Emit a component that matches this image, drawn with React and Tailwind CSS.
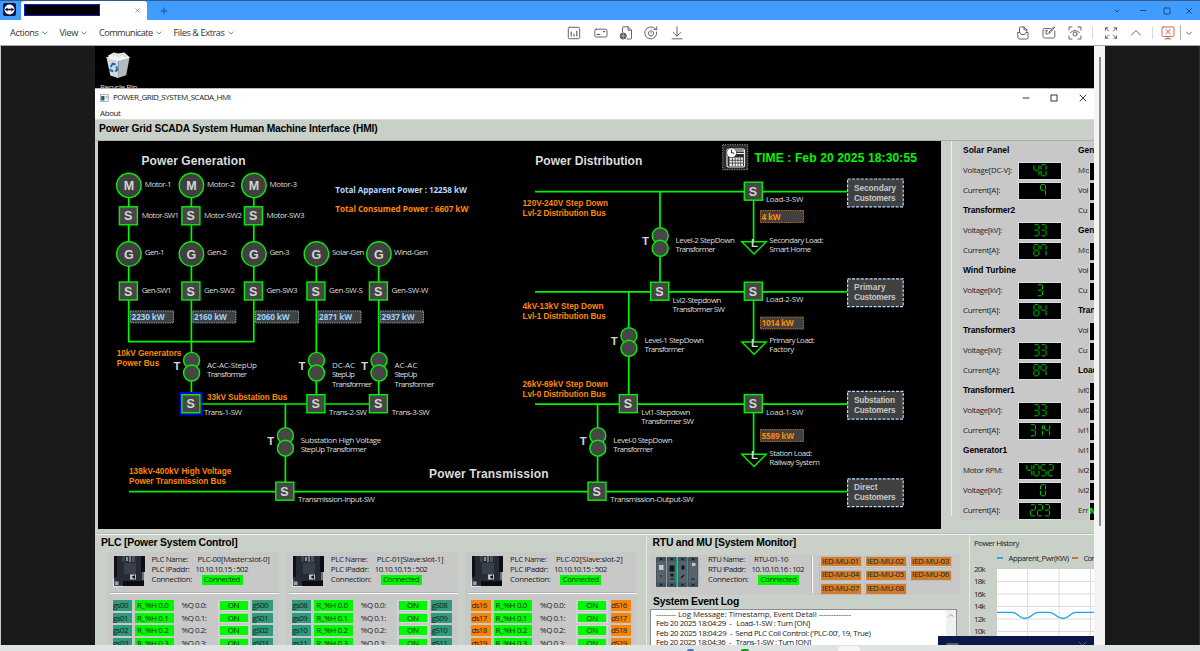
import React, { useLayoutEffect, useRef, useState } from "react";

const SEGOE = '"Open Sans", "Noto Sans", sans-serif';
const ARIAL = '"Liberation Sans", Arial, sans-serif';

/* Text whose letter spacing is tuned so that it spans exactly `w` pixels. */
function Fit({ w, className = "", children }) {
  const ref = useRef(null);
  const [spacing, setSpacing] = useState(0);
  useLayoutEffect(() => {
    const natural = ref.current.getBoundingClientRect().width;
    setSpacing((w - natural) / String(children).length);
  }, []);
  return (
    <span ref={ref} className={`inline-block shrink-0 whitespace-pre ${className}`} style={{ letterSpacing: `${spacing}px` }}>
      {children}
    </span>
  );
}

/* ---------- single-line diagram pieces ---------- */

const G = "#00f400";

function Label({ x, y, w, children, size = 8, fill = "#dcdcdc", bold = false, arial = false }) {
  return (
    <text
      x={x}
      y={y + size * 0.35}
      textLength={w}
      fontSize={size}
      fill={fill}
      fontWeight={bold ? 700 : 400}
      fontFamily={arial ? ARIAL : SEGOE}
    >
      {children}
    </text>
  );
}

function Glyph({ x, y, size = 12.5, children }) {
  return (
    <text x={x} y={y + size * 0.36} textAnchor="middle" fontSize={size} fontWeight="700" fontFamily={ARIAL} fill="#d2d6d2">
      {children}
    </text>
  );
}

function Round({ x, y, t }) {
  return (
    <g>
      <circle cx={x} cy={y} r="12.2" fill="#404040" stroke={G} strokeWidth="1.4" />
      <Glyph x={x} y={y + 0.5}>{t}</Glyph>
    </g>
  );
}

function Switch({ x, y }) {
  return (
    <g>
      <rect x={x - 9} y={y - 9} width="18" height="18" fill="#464646" stroke={G} strokeWidth="1.4" />
      <Glyph x={x - 0.3} y={y}>S</Glyph>
    </g>
  );
}

function Transformer({ x, y }) {
  return (
    <g>
      <circle cx={x} cy={y} r="8" fill="#464646" stroke={G} strokeWidth="1.4" />
      <circle cx={x} cy={y + 12.6} r="8" fill="#464646" stroke={G} strokeWidth="1.4" />
      <Glyph x={x - 14.6} y={y + 5.5} size={11.5}>T</Glyph>
    </g>
  );
}

function Meter({ x, y, w, color, children }) {
  return (
    <g>
      <rect x={x + 0.5} y={y + 0.5} width="43" height="12" fill="#404040" stroke={color} strokeOpacity="0.85" strokeWidth="0.9" strokeDasharray="1.4 0.9" />
      <Label x={x + 1.6} y={y + 6.9} w={w} bold size={8.2} fill={color}>{children}</Label>
    </g>
  );
}

function Load({ y }) {
  return (
    <g>
      <path d={`M741.8 ${y}H766.2L754 ${y + 12.2}Z`} fill="none" stroke={G} strokeWidth="1.4" />
      <Glyph x={754.6} y={y + 1} size={11.5}>L</Glyph>
    </g>
  );
}

function Customers({ y, name, w }) {
  return (
    <g>
      <rect x="847.6" y={y} width="55.6" height="27.8" fill="#404040" stroke="#b4dcff" strokeWidth="1.2" strokeDasharray="3 1.4" />
      <Label x={854} y={y + 8.7} w={w} size={8.3} bold arial fill="#c8c8c8">{name}</Label>
      <Label x={854} y={y + 18.7} w={41.5} size={8.3} bold arial fill="#c8c8c8">Customers</Label>
    </g>
  );
}

const WIRES = [
  "M128.7 186V341.7M191.4 186V404M253.8 186V341.7M128 341.7H254.5M316.3 254V404M378.7 254V404",
  "M190 404H378.7M285.4 404V491.6M129 491.6H847M535 191.6H847M660 191.6V291M535 291.8H847",
  "M753.6 191V241.7M753.6 291V342M753.6 404V454M628.8 291.8V404M535 404.1H847M597.6 404V491.6",
];

const LABELS = [
  [144.7, 184, 27, "Motor-1"], [207, 184, 28, "Motor-2"], [269.5, 184, 27.5, "Motor-3"],
  [141.7, 215, 37.5, "Motor-SW1"], [204, 215, 38, "Motor-SW2"], [266.5, 215, 38, "Motor-SW3"],
  [144.7, 252.5, 20, "Gen-1"], [207, 252.5, 20, "Gen-2"], [269.5, 252.5, 20, "Gen-3"],
  [332, 252.5, 32.5, "Solar-Gen"], [394, 252.5, 34, "Wind-Gen"],
  [141.7, 290, 30, "Gen-SW1"], [204, 290, 31, "Gen-SW2"], [266.5, 290, 31, "Gen-SW3"],
  [329, 290, 34, "Gen-SW-S"], [391.5, 290, 37, "Gen-SW-W"],
  [207, 365, 50, "AC-AC-StepUp"], [207, 374.5, 40, "Transformer"],
  [332, 365, 23, "DC-AC"], [332, 374.5, 23, "StepUp"], [332, 384, 40, "Transformer"],
  [394.5, 365, 23, "AC-AC"], [394.5, 374.5, 23, "StepUp"], [394.5, 384, 40, "Transformer"],
  [204, 412, 38, "Trans-1-SW"], [329, 412, 38, "Trans-2-SW"], [391.7, 412, 38, "Trans-3-SW"],
  [300.7, 440, 80.5, "Substation High Voltage"], [300.7, 449.5, 66, "StepUp Transformer"],
  [298, 499.5, 77, "Transmission-Input-SW"], [610.2, 499.5, 83.5, "Transmission-Output-SW"],
  [766, 199.5, 37.3, "Load-3-SW"], [766, 299.5, 37.3, "Load-2-SW"], [766, 412, 37.3, "Load-1-SW"],
  [675.5, 240, 59.5, "Level-2 StepDown"], [675.5, 249.5, 40, "Transformer"],
  [644.5, 340, 59.5, "Level-1 StepDown"], [644.5, 349.5, 40, "Transformer"],
  [613.2, 440, 59.5, "Level-0 StepDown"], [613.2, 449.5, 40, "Transformer"],
  [672.5, 300, 49, "Lvl2-Stepdown"], [672.5, 309.2, 52.5, "Transformer SW"],
  [641.3, 412, 49, "Lvl1-Stepdown"], [641.3, 421.5, 52.5, "Transformer SW"],
  [769.3, 240, 54.3, "Secondary Load:"], [769.3, 249.5, 42, "Smart Home"],
  [769.3, 340, 45.5, "Primary Load:"], [769.3, 349.5, 25, "Factory"],
  [769.3, 452.7, 43, "Station Load:"], [769.3, 462, 50.5, "Railway System"],
];

const BUSES = [
  [116.7, 352.7, 64.7, "10kV Generators"], [116.7, 362.7, 42.5, "Power Bus"],
  [207, 396.7, 80.3, "33kV Substation Bus"],
  [129, 471.5, 102.3, "138kV-400kV High Voltage"], [129, 481.5, 97, "Power Transmission Bus"],
  [522.5, 202.8, 85.5, "120V-240V Step Down"], [522.5, 212.8, 83.3, "Lvl-2 Distribution Bus"],
  [522.5, 306, 81, "4kV-13kV Step Down"], [522.5, 316, 83.3, "Lvl-1 Distribution Bus"],
  [522.5, 384, 85.5, "26kV-69kV Step Down"], [522.5, 394, 83.3, "Lvl-0 Distribution Bus"],
];

const SWITCHES = [
  [128.4, 215.8], [190.9, 215.8], [253.4, 215.8],
  [128.4, 291], [190.9, 291], [253.4, 291], [315.9, 291], [378.4, 291],
  [190.9, 403.7], [315.9, 403.7], [378.4, 403.7], [284.8, 491.2], [597, 491.2],
  [753.3, 191.2], [659.7, 291.2], [753.3, 291.2], [628.3, 403.6], [753.3, 403.6],
];

function GridMap() {
  return (
    <svg className="block h-[388px] w-[843px] shrink-0 bg-black" viewBox="98 141 843 388">
      <g fill="none" stroke={G} strokeWidth="1.7">
        {WIRES.map((d) => <path key={d} d={d} />)}
      </g>
      <Label x={141.5} y={161} w={104} size={12} bold arial>Power Generation</Label>
      <Label x={535.3} y={161} w={107} size={12} bold arial>Power Distribution</Label>
      <Label x={429} y={473.7} w={119.5} size={12} bold arial>Power Transmission</Label>
      <Label x={335.3} y={190.3} w={131.5} size={8.2} bold fill="#aed8ff">Total Apparent Power : 12258 kW</Label>
      <Label x={335.3} y={209.2} w={133} size={8.2} bold fill="#ff8800">Total Consumed Power : 6607 kW</Label>
      <Label x={754.6} y={158.1} w={162.4} size={12} bold arial fill="#00f800">TIME : Feb 20 2025 18:30:55</Label>

      <rect x="722.7" y="144.7" width="25" height="25" fill="#2c2c2c" stroke="#9a9a9a" strokeDasharray="1.2 1.2" />
      <rect x="727" y="149" width="17.5" height="18" rx="1.5" fill="none" stroke="#e8e8e8" strokeWidth="1.2" />
      <path d="M735 151h9M735 153.5h9" stroke="#fff" strokeWidth="1.2" />
      <rect x="729.5" y="157.5" width="13.5" height="8.5" fill="#f2f2f2" />
      <path d="M732.4 157.5v8.5M735.2 157.5v8.5M738 157.5v8.5M740.7 157.5v8.5M729.5 160.3h13.5M729.5 163.1h13.5" stroke="#222" strokeWidth="0.7" />
      <circle cx="731.6" cy="152.8" r="4.9" fill="#fff" stroke="#222" strokeWidth="0.6" />
      <path d="M731.6 149.5V153H734.2" fill="none" stroke="#111" strokeWidth="0.9" />

      {[128.9, 191.4, 253.9].map((x, i) => <Round key={i} x={x} y={185.4} t="M" />)}
      {[128.9, 191.4, 253.9, 316.4, 378.9].map((x, i) => <Round key={i} x={x} y={254} t="G" />)}
      <rect x="181" y="393" width="20.6" height="21.4" fill="none" stroke="#0000ff" strokeWidth="2" />
      {SWITCHES.map(([x, y], i) => <Switch key={i} x={x} y={y} />)}
      {[[191.6, 360.4], [316.5, 360.4], [379, 360.4], [285.4, 435.6], [660.2, 235.7], [628.9, 335.7], [597.8, 435.6]].map(([x, y], i) => (
        <Transformer key={i} x={x} y={y} />
      ))}
      <Load y={241.8} />
      <Load y={342} />
      <Load y={454.2} />

      <Meter x={130} y={310.4} w={33} color="#9cd0f8">2230 kW</Meter>
      <Meter x={192.4} y={310.4} w={33} color="#9cd0f8">2160 kW</Meter>
      <Meter x={255} y={310.4} w={33} color="#9cd0f8">2060 kW</Meter>
      <Meter x={317.5} y={310.4} w={33} color="#9cd0f8">2871 kW</Meter>
      <Meter x={380} y={310.4} w={33} color="#9cd0f8">2937 kW</Meter>
      <Meter x={760} y={210} w={19} color="#ff8800">4 kW</Meter>
      <Meter x={760} y={316.5} w={32} color="#ff8800">1014 kW</Meter>
      <Meter x={760} y={429} w={32.5} color="#ff8800">5589 kW</Meter>

      <Customers y={179} name="Secondary" w={42} />
      <Customers y={278.8} name="Primary" w={31.5} />
      <Customers y={391.4} name="Substation" w={41} />
      <Customers y={478.8} name="Direct" w={23.5} />

      {LABELS.map(([x, y, w, t], i) => <Label key={i} x={x} y={y} w={w}>{t}</Label>)}
      {BUSES.map(([x, y, w, t], i) => <Label key={i} x={x} y={y} w={w} size={8.2} bold arial fill="#ff8800">{t}</Label>)}
    </svg>
  );
}

/* ---------- seven segment gauges ---------- */

const SEG_PATH = {
  a: "M0.9 0.5H4.7", b: "M5.4 1.2V5.3", c: "M5.4 6.7V11", d: "M0.9 11.6H4.7",
  e: "M0.4 6.7V11", f: "M0.4 1.2V5.3", g: "M0.9 6H4.7",
};
const DIGITS = {
  0: "abcdef", 1: "bc", 2: "abdeg", 3: "abcdg", 4: "bcfg", 5: "acdfg",
  7: "abcf", 8: "abcdefg", 9: "abcfg",
};

function Display({ value, shift = 0 }) {
  const start = 21 - (value.length * 7.1 - 1.3) / 2 + shift;
  return (
    <svg className="h-[18px] w-[44px] shrink-0 border border-[#d8dce4] bg-black" viewBox="0 0 42 16">
      {value.split("").map((d, i) => (
        <g key={i} transform={`translate(${start + i * 7.1} 1.2)`} stroke="#00c400" strokeWidth="1">
          {(DIGITS[d] || "").split("").map((s) => <path key={s} d={SEG_PATH[s]} />)}
        </g>
      ))}
    </svg>
  );
}

const GAUGES = [
  ["Solar Panel", 46.5], ["Voltage[DC-V]:", 49, "40"], ["Current[A]:", 37, "9", 3],
  ["Transformer2", 52], ["Voltage[kV]:", 39, "33"], ["Current[A]:", 37, "87"],
  ["Wind Turbine", 53], ["Voltage[kV]:", 39, "3"], ["Current[A]:", 37, "84"],
  ["Transformer3", 52], ["Voltage[kV]:", 39, "33"], ["Current[A]:", 37, "89"],
  ["Transformer1", 51.5], ["Voltage[kV]:", 39, "33"], ["Current[A]:", 37, "314"],
  ["Generator1", 44], ["Motor RPM:", 39.5, "4052"], ["Voltage[kV]:", 39, "0", 3], ["Current[A]:", 37, "223"],
];

const CLIPPED = [
  ["Gen", 16.5, 1], ["Mo", 12], ["Vol", 10], ["Cu", 9.5],
  ["Gen", 16.5, 1], ["Mo", 12], ["Vol", 10], ["Cu", 9.5],
  ["Tran", 17.5, 1], ["Vol", 10], ["Cu", 9.5],
  ["Load", 19.5, 1], ["lvl0", 11.5], ["lvl0", 11.5], ["lvl1", 11.5], ["lvl1", 11.5],
  ["lvl2", 11.5], ["lvl2", 11.5], ["Err", 10.3],
];

function GaugePanel() {
  return (
    <div className="flex h-[379px] w-[134px] shrink-0 overflow-hidden bg-[#c8c8c8] pl-[3px] text-[7.9px] leading-none text-[#222]">
      <div className="flex w-[115px] shrink-0 flex-col">
        {GAUGES.map(([label, w, value, shift], i) => (
          <div key={i} className="flex h-[20px] shrink-0 items-center justify-between pr-[16.5px]">
            {value ? (
              <>
                <Fit w={w}>{label}</Fit>
                <Display value={value} shift={shift} />
              </>
            ) : (
              <Fit w={w} className="pb-[1px] font-['Liberation_Sans'] text-[8.4px] font-bold text-black">{label}</Fit>
            )}
          </div>
        ))}
      </div>
      <div className="flex w-[16px] shrink-0 flex-col overflow-hidden">
        {CLIPPED.map(([label, w, head], i) => (
          <div key={i} className="flex h-[20px] shrink-0 items-center">
            {head ? (
              <Fit w={w} className="pb-[1px] font-['Liberation_Sans'] text-[8.4px] font-bold text-black">{label}</Fit>
            ) : (
              <>
                <span className="w-[10.5px] shrink-0 overflow-hidden"><Fit w={w}>{label}</Fit></span>
                <span className="flex h-[17px] w-[6px] shrink-0 items-center overflow-hidden border-l border-[#d8dce4] bg-black text-[8px] font-bold text-[#00ff00]">
                  {i === 18 ? "N" : ""}
                </span>
              </>
            )}
          </div>
        ))}
      </div>
    </div>
  );
}

/* ---------- lower panels ---------- */

function PlcPicture() {
  return (
    <svg className="h-[32px] w-[32px] shrink-0" viewBox="0 0 32 32">
      <rect x="1" y="1" width="30" height="30" fill="#262b36" />
      <rect x="1" y="1" width="3" height="21" fill="#111" />
      <rect x="28" y="1" width="4" height="16" fill="#0c0e12" />
      <rect x="29" y="17" width="2" height="8" fill="#6b7078" />
      <rect x="9" y="1" width="3" height="6" fill="#3c444e" />
      <rect x="13" y="2" width="2" height="4" fill="#8a929a" />
      <rect x="16" y="1" width="2" height="6" fill="#727a84" />
      <rect x="19" y="1" width="3" height="6" fill="#49525e" />
      <rect x="11" y="8" width="12" height="11" fill="#3a404a" />
      <rect x="17" y="19.5" width="6" height="5" fill="#c4c8c8" />
      <path d="M22 20v4l-3.5-2z" fill="#111" />
      <rect x="10" y="26" width="21" height="5" fill="#0b0c10" />
      <rect x="2" y="26.5" width="3.6" height="3.6" fill="#99a0ae" />
      <path d="M0.7 24v7.4H10" fill="none" stroke="#e8e8e8" />
    </svg>
  );
}

function Connected() {
  return (
    <span className="flex h-[10px] w-[41px] items-center justify-center bg-[#00f800] text-[#063a06]">
      <Fit w={36}>Connected</Fit>
    </span>
  );
}

function Field({ label, w, col, children }) {
  return (
    <div className="flex h-[10px] items-center">
      <span className={`flex shrink-0 ${col}`}><Fit w={w}>{label}</Fit></span>
      {children}
    </div>
  );
}

function Plc({ name, nameW, inputs, outputs, tag }) {
  return (
    <div className="flex h-[94px] w-[172px] shrink-0 flex-col bg-[#c8c8c8] text-[8px] leading-none text-[#1c1c1c]">
      <div className="flex h-[40px] shrink-0 pl-[6px] pt-[2.5px]">
        <PlcPicture />
        <div className="ml-[7px] flex flex-col text-[7.9px]">
          <Field label="PLC Name:" w={36.5} col="w-[46px]"><Fit w={nameW}>{name}</Fit></Field>
          <Field label="PLC IPaddr:" w={38} col="w-[44px]"><Fit w={52.5}>10.10.10.15 : 502</Fit></Field>
          <Field label="Connection:" w={40.5} col="w-[50px]"><Connected /></Field>
        </div>
      </div>
      <div className="ml-[3px] h-[2px] shrink-0 border-b border-white bg-[#b4b4b4]" />
      <div className="flex flex-col overflow-hidden pt-[5px]">
        {inputs.map((id, i) => (
          <div key={id} className="flex h-[12.5px] shrink-0 items-center pl-[6px]">
            <span className={`flex h-[10.5px] w-[19.5px] items-center pl-[0.5px] ${tag}`}><Fit w={15}>{id}</Fit></span>
            <span className="ml-[3px] flex h-[10.5px] w-[38.5px] items-center bg-[#00f800] pl-[2px]"><Fit w={31.5}>{`R_%H 0.${i}`}</Fit></span>
            <span className="ml-[8px] w-[36px]"><Fit w={25}>{`%Q 0.${i}:`}</Fit></span>
            <span className="flex h-[11px] w-[32px] items-center justify-center border border-[#d6d6d6]">
              <span className="flex h-[8.5px] w-[28px] items-center justify-center bg-[#00f800]"><Fit w={11.5}>ON</Fit></span>
            </span>
            <span className={`ml-[2.5px] flex h-[10.5px] w-[20.5px] items-center pl-[0.5px] ${tag}`}><Fit w={15.5}>{outputs[i]}</Fit></span>
          </div>
        ))}
      </div>
    </div>
  );
}

function RtuPicture() {
  return (
    <svg className="h-[30px] w-[43px] shrink-0" viewBox="0 0 43 30">
      {[0, 10.8, 21.6, 32].map((x, i) => (
        <g key={i}>
          <rect x={x} y="0" width="10.2" height="30" rx="0.8" fill="#44525e" />
          <rect x={x + 0.8} y="4.5" width="8.4" height="21" fill="#56646f" />
          <circle cx={x + 5} cy="2.2" r="1.1" fill="#151a1e" />
          <circle cx={x + 5} cy="27.8" r="1.1" fill="#151a1e" />
        </g>
      ))}
      <path d="M3 8h4.5v5H3zM36 6h3.4v3H36z" fill="#c2c8c8" />
      <path d="M4 19h2M14 9h4v5h-4zM15 17h2v2h-2zM14 22h4M26 9h2v3h-2zM25 21l3-3M35 22h4" stroke="#10161a" fill="#10161a" strokeWidth="1.1" />
      <path d="M20.6 1v28M31.4 1v28" stroke="#00b870" strokeWidth="1" />
    </svg>
  );
}

const IEDS = ["01", "02", "03", "04", "05", "06", "07", "08"];

function RtuColumn() {
  return (
    <div className="flex w-[322px] shrink-0 flex-col pl-[3px] text-[#1c1c1c]">
      <div className="flex h-[20px] shrink-0 items-center pl-[2.5px] pb-[3px]">
        <Fit w={143.5} className="font-['Liberation_Sans'] text-[10.4px] font-bold leading-none text-black">RTU and MU [System Monitor]</Fit>
      </div>
      <div className="flex h-[40px] w-[310px] shrink-0 bg-[#c8c8c8] text-[7.9px] leading-none">
        <div className="pl-[6px] pt-[1.5px]"><RtuPicture /></div>
        <div className="ml-[9px] flex w-[103px] shrink-0 flex-col">
          <Field label="RTU Name:" w={36.5} col="w-[46px]"><Fit w={34}>RTU-01-10</Fit></Field>
          <Field label="RTU IPaddr:" w={37.5} col="w-[43.5px]"><Fit w={52.5}>10.10.10.16 : 102</Fit></Field>
          <Field label="Connection:" w={40.5} col="w-[50px]"><Connected /></Field>
        </div>
        <div className="mt-px h-[37px] w-[2px] border-l border-[#b0b0b0] bg-white" />
        <div className="ml-[6px] grid h-[39px] grid-cols-3 gap-x-[2px] gap-y-[2px] pt-[1px]">
          {IEDS.map((n) => (
            <span key={n} className="flex h-[11.6px] w-[43px] items-center justify-center border border-[#bdbdbd] bg-[#d0d0d0]">
              <span className="flex h-[9.2px] w-[40px] items-center justify-center bg-[#d07c28]"><Fit w={37}>{`IED-MU-${n}`}</Fit></span>
            </span>
          ))}
        </div>
      </div>
      <div className="flex h-[14px] shrink-0 items-center pl-[3px]">
        <Fit w={86} className="font-['Liberation_Sans'] text-[10.4px] font-bold leading-none text-black">System Event Log</Fit>
      </div>
      <div className="flex h-[50px] w-[307px] shrink-0 justify-between border border-[#8a8e94] bg-white text-[7.9px] leading-[9.4px]">
        <div className="flex flex-col items-start pl-[5px]">
          <Fit w={195}>-------- Log Message: Timestamp, Event Detail -------------</Fit>
          <Fit w={154}>{"Feb 20 2025 18:04:29  -   Load-1-SW : Turn [ON]"}</Fit>
          <Fit w={214.5}>{"Feb 20 2025 18:04:29  -  Send PLC Coil Control: ('PLC-00', 19, True)"}</Fit>
          <Fit w={155}>{"Feb 20 2025 18:04:36  -   Trans-1-SW : Turn [ON]"}</Fit>
        </div>
        <div className="flex w-[10px] justify-center bg-[#f0f0f0] pt-[3px]">
          <svg className="h-[5px] w-[6px]" viewBox="0 0 6 5"><path d="M0.8 3.6L3 1.4L5.2 3.6" fill="none" stroke="#888" strokeWidth="0.8" /></svg>
        </div>
      </div>
    </div>
  );
}

function HistoryColumn() {
  return (
    <div className="flex min-w-0 flex-1 flex-col overflow-hidden border-l border-[#e8ece8] pl-[4px] text-[7.9px] leading-none text-[#222]">
      <div className="flex h-[17.5px] shrink-0 items-center"><Fit w={45}>Power History</Fit></div>
      <div className="flex h-[13px] shrink-0 items-center whitespace-nowrap pl-[22.5px]">
        <span className="mr-[6px] mb-[2px] h-[1.4px] w-[6px] shrink-0 bg-[#2ea8f0]" />
        <Fit w={60}>Apparent_Pwr(KW)</Fit>
        <span className="ml-[3px] mr-[6px] mb-[2px] h-[1.4px] w-[6px] shrink-0 bg-[#b87838]" />
        <Fit w={14.5}>Cons</Fit>
      </div>
      <div className="flex shrink-0">
        <div className="flex w-[22.5px] shrink-0 flex-col">
          {["20k", "18k", "16k", "14k", "12k", "10k"].map((t) => (
            <span key={t} className="flex h-[12.5px] items-start"><Fit w={11}>{t}</Fit></span>
          ))}
        </div>
        <svg className="mt-[3px] h-[78px] w-[98px] shrink-0 bg-white" viewBox="0 0 98 78">
          <path d="M0 12.5H98M0 25H98M0 37.5H98M0 50H98M0 62.5H98M30.7 0V78M62 0V78M93.5 0V78" stroke="#dcdcdc" strokeWidth="1" />
          <path d="M0 43.3H15C21 43.3 22 49.5 28 49.5C35 49.5 35 43.3 41 43.3H52C58 43.3 60 49.5 66 49.5C72 49.5 73 43.3 79 43.3H98" fill="none" stroke="#1ea4f0" strokeWidth="1.3" />
        </svg>
      </div>
    </div>
  );
}

/* ---------- viewer chrome ---------- */

function Icon({ w, children, color = "#555", box = 14 }) {
  return (
    <span className={`flex shrink-0 items-center justify-center ${w}`}>
      <svg width={box} height={box} viewBox={`0 0 ${box} ${box}`} fill="none" stroke={color} strokeWidth="0.9" strokeLinecap="round" strokeLinejoin="round">
        {children}
      </svg>
    </span>
  );
}

function MenuItem({ w, children }) {
  return (
    <span className="flex items-center">
      <Fit w={w}>{children}</Fit>
      <svg className="ml-[3px] mt-[2px] h-[4px] w-[6px]" viewBox="0 0 6 4"><path d="M0.5 0.6L3 3.1L5.5 0.6" fill="none" stroke="#666" strokeWidth="0.8" /></svg>
    </span>
  );
}

function TitleBar() {
  return (
    <div className="flex h-[20px] shrink-0 items-stretch border-t border-[#385a8c] bg-[#409cff]">
      <span className="flex w-[21px] items-center pl-[3px] pb-[2px]">
        <svg className="h-[13px] w-[13px]" viewBox="0 0 13 13">
          <rect width="13" height="13" rx="2" fill="#081440" />
          <circle cx="6.5" cy="6.5" r="5" fill="#fff" />
          <path d="M1.8 6.5L4.6 4.4V5.7H8.4V4.4L11.2 6.5L8.4 8.6V7.3H4.6V8.6Z" fill="#081440" />
        </svg>
      </span>
      <div className="flex w-[126px] items-center justify-between rounded-t-[3px] bg-white pl-[3px] pr-[7px]">
        <span className="mb-[1px] h-[12px] w-[76px] border border-[#1818c8] bg-black" />
        <svg className="h-[5px] w-[5px]" viewBox="0 0 5 5"><path d="M0.5 0.5L4.5 4.5M4.5 0.5L0.5 4.5" stroke="#888" strokeWidth="0.8" /></svg>
      </div>
      <Icon w="w-[33px]" box={8} color="#174a80"><path d="M4 1V7M1 4H7" /></Icon>
      <div className="ml-auto flex items-stretch">
        <Icon w="w-[26px]" box={8} color="#1c4470"><path d="M2 3L4 5L6 3" /></Icon>
        <Icon w="w-[26px]" box={8} color="#1c4470"><path d="M1.3 3.5H6.8" /></Icon>
        <Icon w="w-[21px]" box={8} color="#1c4470"><rect x="1" y="1" width="6" height="6" rx="0.8" /></Icon>
        <Icon w="w-[23px]" box={8} color="#1c4470"><path d="M1.5 1.5L6.5 6.5M6.5 1.5L1.5 6.5" /></Icon>
      </div>
    </div>
  );
}

function ToolBar() {
  return (
    <div className="flex h-[26px] shrink-0 items-stretch border-b border-[#a8a8a8] bg-white text-[9.2px] leading-none text-[#333]">
      <div className="flex w-[561px] shrink-0 items-center gap-[12px] pl-[10px]">
        <MenuItem w={28.5}>Actions</MenuItem>
        <MenuItem w={18.5}>View</MenuItem>
        <MenuItem w={53.5}>Communicate</MenuItem>
        <MenuItem w={51}>{"Files & Extras"}</MenuItem>
      </div>
      <Icon w="w-[26.5px]"><rect x="1.3" y="1.3" width="11.4" height="11.4" rx="1.2" /><path d="M4.2 10V6M7 10V8M9.8 10V5" strokeWidth="1.1" /></Icon>
      <Icon w="w-[26px]"><rect x="0.8" y="3.2" width="12.2" height="7.8" rx="1.4" /><path d="M3 8.5H6M9.5 5.6H10.8" strokeWidth="1.2" /></Icon>
      <Icon w="w-[24px]"><path d="M3.5 6V1.5Q3.5 0.8 4.2 0.8H9L12.5 4.2V12.3Q12.5 13 11.8 13H8M9 0.8V4.2H12.5" /><circle cx="4.2" cy="10" r="3.1" fill="#555" /><path d="M1.5 10H7M4.2 7.2V12.8" stroke="#ddd" strokeWidth="0.6" /></Icon>
      <Icon w="w-[27px]"><path d="M12.7 6A6 6 0 1 1 10.6 2.3L12.6 3.6M12.7 0.8V3.6H10" /><path d="M5.2 5.2A2.7 2.7 0 1 0 8.8 5.2M7 4V7" /></Icon>
      <Icon w="w-[25px]"><path d="M7 0.8V10M3.3 6.5L7 10.2L10.7 6.5M2 12.8H12" /></Icon>
      <div className="ml-auto flex items-stretch pr-[4px]">
        <Icon w="w-[26px]"><path d="M3.5 6.5V2Q3.5 1 4.5 1H8L10.8 3.8V6.5M8 1V3.8H10.8M2 6.5H4L5.2 8.5H8.8L10 6.5H12V11.7Q12 13 10.7 13H3.3Q2 13 2 11.7Z" /></Icon>
        <Icon w="w-[26px]"><path d="M12.8 5V10.5Q12.8 12 11.3 12H2.5Q1 12 1 10.5V4Q1 2.5 2.5 2.5H8.5M12.8 1.2L8 6.8L6.8 7.2L7.2 6L11.8 0.8M3 4.8L5.5 4.5L3.5 7.5L6 8.2" /></Icon>
        <Icon w="w-[25px]"><path d="M1 4V1H4M10 1H13V4M13 10V13H10M4 13H1V10M2.5 6.5Q7 2.5 11.5 6.5" /><circle cx="7" cy="8" r="2" /></Icon>
        <span className="flex w-[11px] items-center justify-center"><span className="h-[12px] w-px bg-[#d8d8d8]" /></span>
        <Icon w="w-[25px]"><path d="M1.5 4.2V1.8H4M1.5 1.8L4.7 5M10 1.8H12.5V4.2M12.5 1.8L9.3 5M1.5 9.8V12.2H4M1.5 12.2L4.7 9M12.5 9.8V12.2H10M12.5 12.2L9.3 9" /></Icon>
        <Icon w="w-[25px]"><path d="M2.5 9L7 4.6L11.5 9" /></Icon>
        <span className="flex w-[8px] items-center justify-center"><span className="h-[12px] w-px bg-[#d8d8d8]" /></span>
        <Icon w="w-[24px]" color="#c05a48"><rect x="1" y="1" width="12" height="9.5" rx="1.2" /><path d="M4.8 3.2L9.2 8M9.2 3.2L4.8 8M7 10.5V12.8M4 12.8H10" /></Icon>
        <span className="my-[5px] w-px bg-[#b0b0b0]" />
        <Icon w="w-[15px]" box={8}><path d="M1.5 3L4 5.5L6.5 3" /></Icon>
      </div>
    </div>
  );
}

function RecycleBin() {
  return (
    <div className="flex h-[42px] shrink-0 flex-col items-start overflow-hidden bg-black pl-[5px]">
      <svg className="ml-[5px] mt-[5px] h-[29px] w-[26px] shrink-0" viewBox="0 0 27 30">
        <path d="M3 5L9 1.5L14 2.5L20 1.5L25 6L21 10H6Z" fill="#f0f0f0" />
        <path d="M8 5L11 2.5L14 6M15 5L19 3L22 7" stroke="#c0c0c0" fill="none" />
        <path d="M1.5 6.5L14 9.5L13.5 28L5.5 25.5Z" fill="#d4d8dc" />
        <path d="M14 9.5L25.5 6.5L22 25L13.5 28Z" fill="#b4b9be" />
        <path d="M1.5 6.5L14 9.5L25.5 6.5" fill="none" stroke="#fff" />
        <path d="M6 16.5L8 13L11 14M12 16L12.5 20L10.5 21M8.5 21L5.5 20L5.5 18.5" fill="none" stroke="#1468c8" strokeWidth="2" />
      </svg>
      <Fit w={37} className="mt-[2px] text-[8px] leading-[10px] text-[#ddd]">Recycle Bin</Fit>
    </div>
  );
}

function HmiWindow() {
  return (
    <div className="flex h-[557px] shrink-0 flex-col overflow-hidden border-t border-[#b8b8b8] bg-[#c8d0c7]">
      <div className="flex h-[17px] shrink-0 items-center bg-white pl-[5px] text-[8px] leading-none text-[#222]">
        <svg className="mr-[4px] h-[8px] w-[9px]" viewBox="0 0 9 8"><rect x="0.4" y="0.4" width="8.2" height="7.2" fill="#f4f4f4" stroke="#999" strokeWidth="0.7" /><rect x="1.2" y="2" width="3.2" height="4.5" fill="#2c5c74" /><rect x="5.5" y="2" width="2.2" height="2.5" fill="#b0c4d0" /></svg>
        <Fit w={117.5} className="pb-[1px]">POWER_GRID_SYSTEM_SCADA_HMI</Fit>
        <div className="ml-auto flex">
          <Icon w="w-[28px]" box={8} color="#222"><path d="M1 4H7" /></Icon>
          <Icon w="w-[28px]" box={8} color="#222"><rect x="1" y="1" width="6" height="6" strokeLinejoin="miter" /></Icon>
          <span className="w-[4px]" />
          <Icon w="w-[22px]" box={8} color="#222"><path d="M1 1L7 7M7 1L1 7" /></Icon>
        </div>
      </div>
      <div className="flex h-[14px] shrink-0 items-center border-b border-[#d8dcd8] bg-white pl-[5px] pt-[1px] text-[8px] leading-none text-[#222]">
        <Fit w={20.5}>About</Fit>
      </div>
      <div className="flex h-[20px] shrink-0 items-center pl-[4px] pb-[1px]">
        <Fit w={278.5} className="font-['Liberation_Sans'] text-[10.2px] font-bold leading-none text-black">Power Grid SCADA System Human Machine Interface (HMI)</Fit>
      </div>
      <div className="flex h-[389px] shrink-0 border-t border-[#a8b0a8] pl-[3px]">
        <GridMap />
        <div className="ml-[10px] mr-[8px] h-[375px] w-px shrink-0 bg-[#eef2ee]" />
        <GaugePanel />
      </div>
      <div className="mt-[4px] h-[2px] shrink-0 border-t border-[#b4bcb4] bg-[#eef2ee]" />
      <div className="flex min-h-0 flex-1">
        <div className="flex w-[551px] shrink-0 flex-col pl-[6px]">
          <div className="flex h-[17px] shrink-0 items-center">
            <Fit w={136.5} className="font-['Liberation_Sans'] text-[10.4px] font-bold leading-none text-black">PLC [Power System Control]</Fit>
          </div>
          <div className="flex gap-[7.3px] pl-[5.5px]">
            <Plc name="PLC-00[Master:slot-0]" nameW={72} inputs={["gs00", "gs01", "gs02", "gs03"]} outputs={["gS00", "gS01", "gS02", "gS03"]} tag="bg-[#2f9a7c]" />
            <Plc name="PLC-01[Slave:slot-1]" nameW={66.5} inputs={["gs08", "gs09", "gs10", "gs11"]} outputs={["gS08", "gS09", "gS10", "gS11"]} tag="bg-[#2f9a7c]" />
            <Plc name="PLC-02[Slave:slot-2]" nameW={66.5} inputs={["ds16", "ds17", "ds18", "ds19"]} outputs={["dS16", "dS17", "dS18", "dS19"]} tag="bg-[#f88408]" />
          </div>
        </div>
        <div className="mt-[2px] w-px shrink-0 bg-[#e8ece8]" />
        <RtuColumn />
        <HistoryColumn />
      </div>
    </div>
  );
}

export default function App() {
  return (
    <div className="flex h-[651px] w-[1200px] flex-col overflow-hidden bg-black font-['Open_Sans','Noto_Sans',sans-serif]">
      <TitleBar />
      <ToolBar />
      <div className="flex h-[599px] shrink-0">
        <div className="w-[95px] shrink-0 border-l border-[#c8c8c8] bg-[#1a1a1a]" />
        <div className="relative flex w-[999px] shrink-0 flex-col overflow-hidden">
          <RecycleBin />
          <HmiWindow />
          <div className="absolute right-0 bottom-0 flex h-[9px] w-[156px] items-end justify-between overflow-hidden bg-[#0c1848] pl-[8px] pr-[8px]">
            <span className="h-[2px] w-[13px] rounded-t-sm bg-[#5a6070]" />
            <svg className="h-[3px] w-[7px]" viewBox="0 0 7 3"><path d="M0 0L3 3M7 0L4 3" stroke="#6a7290" strokeWidth="0.8" /></svg>
          </div>
        </div>
        <div className="flex w-[11px] shrink-0 justify-center bg-[#f4f4f4]">
          <span className="mt-[11px] h-[469px] w-[2px] bg-[#8c8c8c]" />
        </div>
        <div className="flex-1 border-r border-[#303030] bg-[#1a1a1a]" />
      </div>
      <div className="flex h-[6px] shrink-0 items-end overflow-hidden bg-[#dfe3e4] pl-[687px]">
        <span className="h-[2px] w-[7px] rounded-t-full bg-[#4878c0]" />
        <span className="ml-[47px] h-[2px] w-[8px] rounded-t-full bg-[#189818]" />
        <span className="ml-[89px] h-[5px] w-[22px] rounded-t-sm bg-[#f4f6f6]" />
      </div>
    </div>
  );
}
